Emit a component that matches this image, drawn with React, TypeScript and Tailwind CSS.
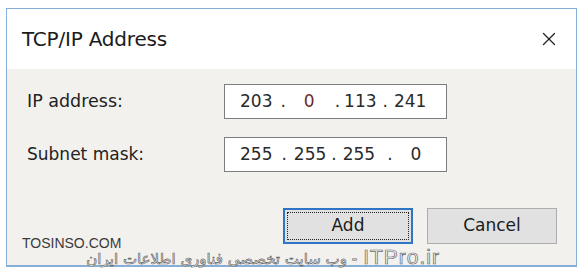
import { X } from 'lucide-react';

const ui = { fontFamily: '"DejaVu Sans", "Liberation Sans", sans-serif' };

function Dot({ ml }: { ml: string }) {
  return <span className={ml}>.</span>;
}

export default function App() {
  return (
    <div className="relative w-[581px] h-[271px] bg-white overflow-hidden" style={ui}>
      <div className="ml-[6px] mt-[8px] w-[571px] h-[259px] border border-[#86aed6] flex flex-col">
        {/* Title bar */}
        <div className="h-[60px] shrink-0 bg-white flex items-center justify-between pl-[15px] pr-[16px]">
          <span className="text-[20px] text-[#1b1b1b] tracking-[-0.2px]">TCP/IP Address</span>
          <X className="w-[22px] h-[22px] text-[#222]" strokeWidth={1.4} />
        </div>

        {/* Body */}
        <div className="flex-1 bg-[#f3f1ee] flex flex-col pl-[20px] pr-[19px] pt-[15px] border-b border-[#86aed6]">
          <div className="flex items-center h-[35px]">
            <div className="w-[197px] text-[17.5px] text-[#222]">IP address:</div>
            <div className="w-[223px] h-[35px] bg-white border border-[#7d7d7d] flex items-center pl-[15px] text-[17px] text-[#2a2a2a]">
              <span>203</span>
              <Dot ml="ml-[8px]" />
              <span className="ml-[18px] text-[#6b2b2b]">0</span>
              <Dot ml="ml-[20px]" />
              <span className="ml-[4px]">113</span>
              <Dot ml="ml-[6px]" />
              <span className="ml-[6px]">241</span>
            </div>
          </div>

          <div className="flex items-center h-[35px] mt-[18px]">
            <div className="w-[197px] text-[17px] text-[#222]">Subnet mask:</div>
            <div className="w-[223px] h-[35px] bg-white border border-[#7d7d7d] flex items-center pl-[15px] text-[17px] text-[#2a2a2a]">
              <span>255</span>
              <Dot ml="ml-[9px]" />
              <span className="ml-[7px]">255</span>
              <Dot ml="ml-[5px]" />
              <span className="ml-[6px]">255</span>
              <Dot ml="ml-[12px]" />
              <span className="ml-[18px]">0</span>
            </div>
          </div>

          <div className="flex justify-end gap-[14px] mt-[36px]">
            <button className="w-[130px] h-[36px] bg-[#e1e1e1] border-2 border-[#2d74c4] p-[2px] flex">
              <span className="flex-1 border border-dotted border-[#222] flex items-center justify-center text-[17px] text-[#1b1b1b]">
                Add
              </span>
            </button>
            <button className="w-[130px] h-[36px] bg-[#e1e1e1] border border-[#adadad] flex items-center justify-center text-[17px] text-[#1b1b1b]">
              Cancel
            </button>
          </div>
        </div>
      </div>

      {/* Watermarks */}
      <span
        className="absolute left-[22px] top-[236px] text-[14px] text-[#3a3a3a] leading-none"
        style={{ fontFamily: '"Liberation Sans", sans-serif' }}
      >
        TOSINSO.COM
      </span>
      <div
        dir="rtl"
        className="absolute right-[141px] top-[246px] flex items-baseline gap-[6px] leading-none whitespace-nowrap text-[#f4f4f4] [-webkit-text-stroke:0.7px_#6a6a6a]"
        style={{ fontFamily: '"DejaVu Sans", sans-serif' }}
      >
        <span dir="ltr" className="text-[21px] tracking-[1px]" style={{ fontFamily: '"Liberation Sans", sans-serif' }}>
          ITPro.ir
        </span>
        <span className="text-[15px]">- وب سایت تخصصی فناوری اطلاعات ایران</span>
      </div>
    </div>
  );
}
